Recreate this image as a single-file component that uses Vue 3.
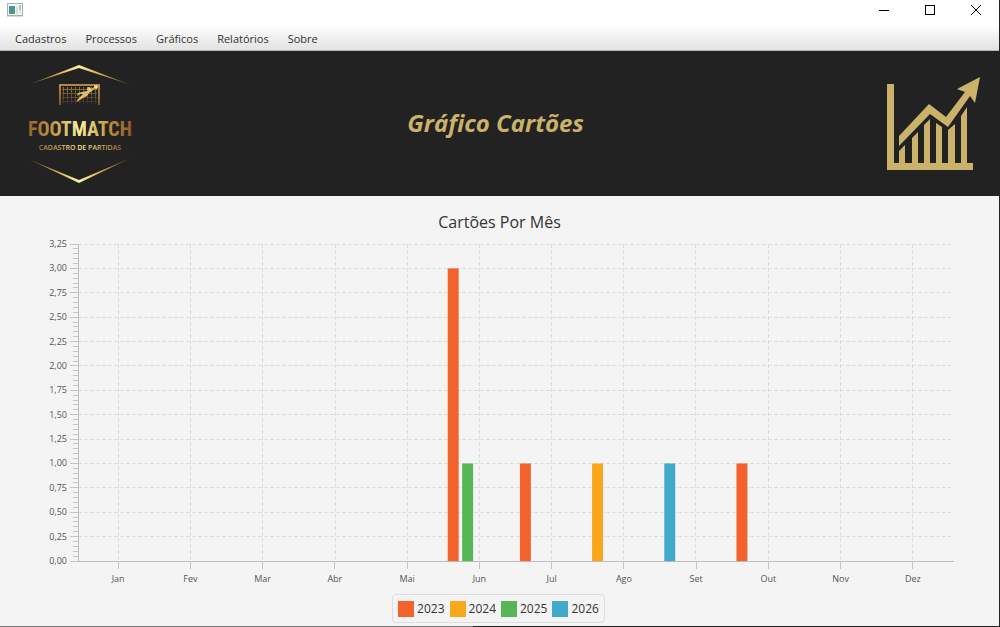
<script setup>
const menus = ['Cadastros', 'Processos', 'Gráficos', 'Relatórios', 'Sobre']
const months = ['Jan', 'Fev', 'Mar', 'Abr', 'Mai', 'Jun', 'Jul', 'Ago', 'Set', 'Out', 'Nov', 'Dez']
const series = [
  { year: '2023', color: '#f3622d' },
  { year: '2024', color: '#fba71b' },
  { year: '2025', color: '#57b757' },
  { year: '2026', color: '#41a9c9' }
]
const cards = [
  { month: 5, year: '2023', slot: 0, value: 3 },
  { month: 5, year: '2025', slot: 1, value: 1 },
  { month: 6, year: '2023', slot: 0, value: 1 },
  { month: 7, year: '2024', slot: 0, value: 1 },
  { month: 8, year: '2026', slot: 0, value: 1 },
  { month: 9, year: '2023', slot: 0, value: 1 }
]

const max = 3.25
const steps = Array.from({ length: 14 }, (_, i) => max - i * 0.25)
const minorTicks = Array.from({ length: 65 }, (_, i) => i)
const format = (n) => n.toFixed(2).replace('.', ',')

const edge = 4.63
const spacing = (100 - 2 * edge) / (months.length - 1)
const monthX = (i) => edge + i * spacing
const percent = (n) => n.toFixed(3) + '%'
const valueY = (v) => (1 - v / max) * 100
const bars = cards.map((c) => ({
  x: percent(monthX(c.month) - 3.62 + c.slot * 1.65),
  y: percent(valueY(c.value)),
  height: percent((c.value / max) * 100),
  color: series.find((s) => s.year === c.year).color
}))
</script>

<template>
  <div class="window">
    <header class="titlebar">
      <svg class="app-icon" width="16" height="14" viewBox="0 0 16 14" aria-hidden="true">
        <defs>
          <linearGradient id="pane" x1="0" y1="0" x2="1" y2="1">
            <stop offset="0" stop-color="#4a86b0" />
            <stop offset="1" stop-color="#4fa568" />
          </linearGradient>
        </defs>
        <rect x="0.5" y="0.5" width="15" height="12" fill="#f4f6f7" stroke="#a9b0b5" />
        <rect x="2" y="3" width="6" height="8" fill="url(#pane)" />
        <rect x="9" y="3" width="2" height="8" fill="#dcdfe1" />
        <rect x="12" y="2" width="2" height="5" fill="#a7cdb9" />
        <rect x="12" y="7" width="2" height="4" fill="#e2e4e6" />
        <rect x="0" y="13" width="16" height="1" fill="#dcdcdc" />
      </svg>
      <div class="controls">
        <button type="button" aria-label="Minimizar">
          <svg width="10" height="10" viewBox="0 0 10 10" shape-rendering="crispEdges"><path d="M0 5.5H10" /></svg>
        </button>
        <button type="button" aria-label="Maximizar">
          <svg width="10" height="10" viewBox="0 0 10 10" shape-rendering="crispEdges"><path d="M.5 .5H9.5V9.5H.5Z" /></svg>
        </button>
        <button type="button" aria-label="Fechar">
          <svg width="10" height="10" viewBox="0 0 10 10"><path d="M0 0L10 10M10 0L0 10" /></svg>
        </button>
      </div>
    </header>

    <nav class="menubar">
      <button v-for="m in menus" :key="m" type="button">{{ m }}</button>
    </nav>

    <section class="banner">
      <svg class="logo" width="138" height="124" viewBox="0 0 138 124" role="img" aria-label="Footmatch">
        <defs>
          <linearGradient id="gold" gradientUnits="userSpaceOnUse" x1="18" y1="0" x2="121" y2="0">
            <stop offset="0" stop-color="#95622a" />
            <stop offset="0.25" stop-color="#c79a48" />
            <stop offset="0.5" stop-color="#fbf09a" />
            <stop offset="0.78" stop-color="#c29443" />
            <stop offset="1" stop-color="#8e5b26" />
          </linearGradient>
          <linearGradient id="shine" gradientUnits="userSpaceOnUse" x1="18" y1="0" x2="121" y2="0">
            <stop offset="0" stop-color="#8a6230" stop-opacity="0.7" />
            <stop offset="0.25" stop-color="#c79a48" />
            <stop offset="0.5" stop-color="#fff6a0" />
            <stop offset="0.75" stop-color="#c79a48" />
            <stop offset="1" stop-color="#8a6230" stop-opacity="0.7" />
          </linearGradient>
          <linearGradient id="net" x1="0" y1="0" x2="0" y2="1">
            <stop offset="0" stop-color="#94713c" />
            <stop offset="1" stop-color="#94713c" stop-opacity="0.15" />
          </linearGradient>
          <linearGradient id="posts" gradientUnits="userSpaceOnUse" x1="0" y1="22" x2="0" y2="44">
            <stop offset="0" stop-color="#b58a48" />
            <stop offset="1" stop-color="#7a5226" />
          </linearGradient>
        </defs>
        <path fill="url(#shine)" d="M20 22L69 3L121 23L69 6Z" />
        <path fill="url(#shine)" d="M18 97L69 118L121 96L69 121Z" />
        <path fill="url(#net)" d="M53 25H54V42H53ZM57 25H58V42H57ZM61 25H62V42H61ZM65 25H66V42H65ZM69 25H70V42H69ZM73 25H74V42H73ZM77 25H78V42H77ZM81 25H82V42H81ZM85 25H86V42H85ZM52 27H87V28H52ZM52 31H87V32H52ZM52 35H87V36H52ZM52 39H87V40H52Z" />
        <path fill="none" stroke="url(#posts)" stroke-width="2" d="M50 43V23H89V43" />
        <path fill="#dfbd69" d="M66 40L68 37L71 34L73 32L70 32L67 34L68 31L72 30L77 29L80 28L84 25L85 26L82 29L79 31L77 34L73 36L70 38Z" />
        <circle cx="79" cy="27" r="2" fill="#e8cb78" />
        <circle cx="86" cy="25" r="2" fill="#f5df8b" />
        <text class="wordmark" x="70" y="74" text-anchor="middle" fill="url(#gold)">FOOTMATCH</text>
        <text class="tagline" x="70" y="88" text-anchor="middle" fill="url(#gold)">CADASTRO DE PARTIDAS</text>
      </svg>
      <h1>Gráfico Cartões</h1>
      <svg class="trend" width="94" height="94" viewBox="0 0 94 94" aria-hidden="true">
        <path d="M0 7H7V86H86V93H0Z" />
        <path d="M12 74L18 68V86H12ZM25 61L31 55V86H25ZM37 48L43 42V86H37ZM49 46L55 50V86H49ZM61 53L68 47V86H61ZM74 39L80 30V86H74Z" />
        <path d="M12 59L42 27L59 40L78 15L70 12L93 0L88 26L83 19L61 50L43 37L12 69Z" />
      </svg>
    </section>

    <main class="chart">
      <h2>Cartões Por Mês</h2>
      <div class="plot-row">
        <div class="y-labels">
          <span v-for="s in steps" :key="s">{{ format(s) }}</span>
        </div>
        <svg class="y-ticks" aria-hidden="true">
          <line v-for="t in minorTicks" :key="'m' + t" x1="3" x2="8" :y1="percent(t / 65 * 100)" :y2="percent(t / 65 * 100)" />
          <line v-for="s in steps" :key="s" x1="0" x2="8" :y1="percent(valueY(s))" :y2="percent(valueY(s))" />
        </svg>
        <svg class="plot" role="img" aria-label="Cartões por mês">
          <g class="grid">
            <line v-for="s in steps.slice(0, -1)" :key="s" x1="0" x2="99.8%" :y1="percent(valueY(s))" :y2="percent(valueY(s))" />
            <line v-for="(m, i) in months" :key="m" y1="0" y2="100%" :x1="percent(monthX(i))" :x2="percent(monthX(i))" />
          </g>
          <rect v-for="(b, i) in bars" :key="i" :x="b.x" :y="b.y" width="1.25%" :height="b.height" :fill="b.color" />
          <line class="axis" x1="0" x2="0" y1="0" y2="100%" />
          <line class="axis" x1="0" x2="100.1%" y1="100%" y2="100%" />
        </svg>
      </div>
      <div class="x-axis">
        <div v-for="m in months" :key="m" class="month">{{ m }}</div>
      </div>
      <ul class="legend">
        <li v-for="s in series" :key="s.year">
          <svg width="16" height="16" aria-hidden="true"><rect width="16" height="16" :fill="s.color" /></svg>
          {{ s.year }}
        </li>
      </ul>
    </main>
  </div>
</template>

<style>
body {
  margin: 0;
}
</style>

<style scoped>
.window {
  box-sizing: border-box;
  min-height: 100vh;
  display: flex;
  flex-direction: column;
  border-right: 1px solid #222;
  background: #f4f4f4;
  font-family: "Open Sans", "Noto Sans", sans-serif;
  color: #333;
}

button {
  border: 0;
  padding: 0;
  background: none;
  font: inherit;
  color: inherit;
}

.titlebar {
  display: flex;
  justify-content: space-between;
  height: 26px;
  padding-left: 7px;
  background: #fff;
}

.app-icon {
  margin-top: 3px;
}

.controls {
  display: flex;
}

.controls button {
  display: flex;
  justify-content: center;
  width: 46px;
  padding-top: 5px;
}

.controls path {
  fill: none;
  stroke: #000;
}

.menubar {
  box-sizing: border-box;
  display: flex;
  gap: 1px;
  height: 25px;
  padding-left: 6px;
  border-bottom: 1px solid #b5b5b5;
  background: linear-gradient(#fdfdfd, #e2e2e2);
  font-size: 11px;
}

.menubar button {
  padding: 0 9px;
}

.banner {
  display: grid;
  grid-template-columns: 1fr auto 1fr;
  align-items: center;
  height: 145px;
  padding: 0 18px 0 10px;
  background: #222;
}

.banner h1 {
  margin: 0 0 2px;
  color: #cbb26a;
  font-size: 24px;
  font-style: italic;
  font-weight: 700;
  line-height: 32px;
}

.wordmark {
  font-family: "Roboto Condensed", "Liberation Sans Narrow", "DejaVu Sans Condensed", sans-serif;
  font-size: 20px;
  font-weight: 700;
}

.tagline {
  font-size: 7px;
  font-weight: 600;
}

.trend {
  justify-self: end;
  fill: #cbb26a;
}

.chart {
  flex: 1;
  display: flex;
  flex-direction: column;
  padding: 14px 46px 4px 44px;
  background: linear-gradient(90deg, #777 473px, #222 473px) bottom / 100% 1px no-repeat;
}

.chart h2 {
  margin: 0 0 10px;
  padding-left: 2px;
  text-align: center;
  font-size: 16px;
  font-weight: 400;
  line-height: 24px;
}

.plot-row {
  flex: 1;
  display: flex;
  min-height: 200px;
}

.y-labels {
  display: flex;
  flex-direction: column;
  justify-content: space-between;
  width: 23px;
  margin: -6px 3px -6px 0;
  text-align: right;
  font-size: 9px;
  line-height: 12px;
  color: #555;
}

.y-ticks,
.plot {
  overflow: visible;
}

.y-ticks {
  width: 8px;
  height: auto;
  stroke: #c4c4c4;
}

.plot {
  flex: 1;
  min-width: 0;
  height: auto;
}

.grid {
  stroke: #dcdcdc;
  stroke-dasharray: 4 2;
}

.grid,
.axis,
.y-ticks {
  shape-rendering: crispEdges;
}

.axis {
  stroke: #bcbcbc;
}

.x-axis {
  display: grid;
  grid-template-columns: repeat(12, 1fr);
  padding: 0 4px 0 38px;
  font-size: 9px;
  line-height: 12px;
  color: #555;
}

.month {
  text-align: center;
}

.month::before {
  content: "";
  display: block;
  width: 1px;
  height: 8px;
  margin: 0 auto 4px;
  background: #c4c4c4;
}

.legend {
  display: flex;
  align-self: center;
  gap: 5px;
  margin: 9px 0 0;
  padding: 5px;
  border: 1px solid #dedede;
  border-radius: 4px;
  list-style: none;
  font-size: 12px;
  line-height: 17px;
}

.legend li {
  display: flex;
  align-items: center;
  gap: 3px;
}
</style>
